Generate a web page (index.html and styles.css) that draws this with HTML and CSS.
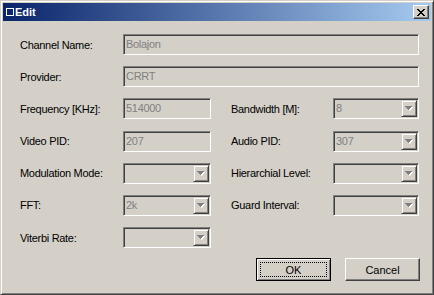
FILE: index.html
```html
<!DOCTYPE html>
<html>
<head>
<meta charset="utf-8">
<link rel="stylesheet" href="styles.css">
</head>
<body>
<div class="window">
  <div class="titlebar">
    <span class="ticon"></span>
    <span class="ttext">Edit</span>
    <div class="close">
      <svg width="8" height="7" viewBox="0 0 8 7" shape-rendering="crispEdges">
        <g fill="#000">
          <rect x="0" y="0" width="2" height="1"/><rect x="6" y="0" width="2" height="1"/>
          <rect x="1" y="1" width="2" height="1"/><rect x="5" y="1" width="2" height="1"/>
          <rect x="2" y="2" width="4" height="1"/>
          <rect x="3" y="3" width="2" height="1"/>
          <rect x="2" y="4" width="4" height="1"/>
          <rect x="1" y="5" width="2" height="1"/><rect x="5" y="5" width="2" height="1"/>
          <rect x="0" y="6" width="2" height="1"/><rect x="6" y="6" width="2" height="1"/>
        </g>
      </svg>
    </div>
  </div>
  <div class="content">
    <div class="form">
      <div class="lbl">Channel Name:</div>
      <div class="edit wide">Bolajon</div>

      <div class="lbl">Provider:</div>
      <div class="edit wide">CRRT</div>

      <div class="lbl">Frequency [KHz]:</div>
      <div class="edit">514000</div>
      <div class="lbl right">Bandwidth [M]:</div>
      <div class="edit combo"><span class="val">8</span><span class="drop"><svg width="8" height="5" viewBox="0 0 8 5" shape-rendering="crispEdges"><g fill="#fff"><rect x="1" y="1" width="7" height="1"/><rect x="2" y="2" width="5" height="1"/><rect x="3" y="3" width="3" height="1"/><rect x="4" y="4" width="1" height="1"/></g><g fill="#808080"><rect x="0" y="0" width="7" height="1"/><rect x="1" y="1" width="5" height="1"/><rect x="2" y="2" width="3" height="1"/><rect x="3" y="3" width="1" height="1"/></g></svg></span></div>

      <div class="lbl">Video PID:</div>
      <div class="edit">207</div>
      <div class="lbl right">Audio PID:</div>
      <div class="edit combo"><span class="val">307</span><span class="drop"><svg width="8" height="5" viewBox="0 0 8 5" shape-rendering="crispEdges"><g fill="#fff"><rect x="1" y="1" width="7" height="1"/><rect x="2" y="2" width="5" height="1"/><rect x="3" y="3" width="3" height="1"/><rect x="4" y="4" width="1" height="1"/></g><g fill="#808080"><rect x="0" y="0" width="7" height="1"/><rect x="1" y="1" width="5" height="1"/><rect x="2" y="2" width="3" height="1"/><rect x="3" y="3" width="1" height="1"/></g></svg></span></div>

      <div class="lbl">Modulation Mode:</div>
      <div class="edit combo"><span class="val"></span><span class="drop"><svg width="8" height="5" viewBox="0 0 8 5" shape-rendering="crispEdges"><g fill="#fff"><rect x="1" y="1" width="7" height="1"/><rect x="2" y="2" width="5" height="1"/><rect x="3" y="3" width="3" height="1"/><rect x="4" y="4" width="1" height="1"/></g><g fill="#808080"><rect x="0" y="0" width="7" height="1"/><rect x="1" y="1" width="5" height="1"/><rect x="2" y="2" width="3" height="1"/><rect x="3" y="3" width="1" height="1"/></g></svg></span></div>
      <div class="lbl right">Hierarchial Level:</div>
      <div class="edit combo"><span class="val"></span><span class="drop"><svg width="8" height="5" viewBox="0 0 8 5" shape-rendering="crispEdges"><g fill="#fff"><rect x="1" y="1" width="7" height="1"/><rect x="2" y="2" width="5" height="1"/><rect x="3" y="3" width="3" height="1"/><rect x="4" y="4" width="1" height="1"/></g><g fill="#808080"><rect x="0" y="0" width="7" height="1"/><rect x="1" y="1" width="5" height="1"/><rect x="2" y="2" width="3" height="1"/><rect x="3" y="3" width="1" height="1"/></g></svg></span></div>

      <div class="lbl">FFT:</div>
      <div class="edit combo"><span class="val">2k</span><span class="drop"><svg width="8" height="5" viewBox="0 0 8 5" shape-rendering="crispEdges"><g fill="#fff"><rect x="1" y="1" width="7" height="1"/><rect x="2" y="2" width="5" height="1"/><rect x="3" y="3" width="3" height="1"/><rect x="4" y="4" width="1" height="1"/></g><g fill="#808080"><rect x="0" y="0" width="7" height="1"/><rect x="1" y="1" width="5" height="1"/><rect x="2" y="2" width="3" height="1"/><rect x="3" y="3" width="1" height="1"/></g></svg></span></div>
      <div class="lbl right">Guard Interval:</div>
      <div class="edit combo"><span class="val"></span><span class="drop"><svg width="8" height="5" viewBox="0 0 8 5" shape-rendering="crispEdges"><g fill="#fff"><rect x="1" y="1" width="7" height="1"/><rect x="2" y="2" width="5" height="1"/><rect x="3" y="3" width="3" height="1"/><rect x="4" y="4" width="1" height="1"/></g><g fill="#808080"><rect x="0" y="0" width="7" height="1"/><rect x="1" y="1" width="5" height="1"/><rect x="2" y="2" width="3" height="1"/><rect x="3" y="3" width="1" height="1"/></g></svg></span></div>

      <div class="lbl">Viterbi Rate:</div>
      <div class="edit combo"><span class="val"></span><span class="drop"><svg width="8" height="5" viewBox="0 0 8 5" shape-rendering="crispEdges"><g fill="#fff"><rect x="1" y="1" width="7" height="1"/><rect x="2" y="2" width="5" height="1"/><rect x="3" y="3" width="3" height="1"/><rect x="4" y="4" width="1" height="1"/></g><g fill="#808080"><rect x="0" y="0" width="7" height="1"/><rect x="1" y="1" width="5" height="1"/><rect x="2" y="2" width="3" height="1"/><rect x="3" y="3" width="1" height="1"/></g></svg></span></div>
    </div>
    <div class="buttons">
      <div class="btn default"><span class="focus">OK</span></div>
      <div class="btn">Cancel</div>
    </div>
  </div>
</div>
</body>
</html>
```

FILE: styles.css
```css
html, body {
  margin: 0;
  padding: 0;
  background: #d4d0c8;
  overflow: hidden;
}

.window {
  box-sizing: border-box;
  width: 434px;
  height: 295px;
  background: #d4d0c8;
  border: 1px solid;
  border-color: #d4d0c8 #404040 #404040 #d4d0c8;
  box-shadow: inset 1px 1px #ffffff, inset -1px -1px #808080;
  padding: 2px;
  font-family: "Liberation Sans", Arial, sans-serif;
  font-size: 11px;
  letter-spacing: -0.3px;
  color: #000;
}

.titlebar {
  display: flex;
  align-items: center;
  height: 18px;
  padding: 0 2px 0 3px;
  background: linear-gradient(to right, #0a246a, #a6caf0);
}

.ticon {
  box-sizing: border-box;
  width: 8px;
  height: 8px;
  border: 1px solid #ffffff;
}

.ttext {
  margin-left: 1px;
  color: #fff;
  font-weight: bold;
  letter-spacing: 0;
  flex: 1;
}

.close {
  box-sizing: border-box;
  width: 16px;
  height: 14px;
  display: flex;
  align-items: center;
  justify-content: center;
  background: #d4d0c8;
  border: 1px solid;
  border-color: #ffffff #404040 #404040 #ffffff;
  box-shadow: inset -1px -1px #808080;
}

.content {
  padding: 13px 11px 0 17px;
}

.form {
  display: grid;
  grid-template-columns: 103px 88px 20px 102px 86px;
  grid-auto-rows: 21px;
  row-gap: 11.2px;
  align-items: center;
}

.lbl {
  grid-column: 1;
  white-space: nowrap;
}

.lbl.right {
  grid-column: 4;
}

.edit {
  box-sizing: border-box;
  height: 21px;
  border: 1px solid;
  border-color: #808080 #ffffff #ffffff #808080;
  box-shadow: inset 1px 1px #404040, inset -1px -1px #d4d0c8;
  padding: 0 2px;
  color: #808080;
  line-height: 19px;
  background: #d4d0c8;
  white-space: nowrap;
}

.edit.wide {
  grid-column: 2 / 6;
}

.combo {
  display: flex;
  padding: 1px 1px 1px 2px;
  line-height: 17px;
}

.combo .val {
  flex: 1;
}

.drop {
  box-sizing: border-box;
  width: 16px;
  height: 17px;
  display: flex;
  align-items: center;
  justify-content: center;
  background: #d4d0c8;
  border: 1px solid;
  border-color: #d4d0c8 #404040 #404040 #d4d0c8;
  box-shadow: inset 1px 1px #ffffff, inset -1px -1px #808080;
}

.buttons {
  display: flex;
  justify-content: flex-end;
  gap: 14px;
  margin-top: 10px;
}

.btn {
  box-sizing: border-box;
  width: 75px;
  height: 23px;
  display: flex;
  align-items: center;
  justify-content: center;
  border: 1px solid;
  border-color: #ffffff #404040 #404040 #ffffff;
  box-shadow: inset -1px -1px #808080;
  background: #d4d0c8;
  letter-spacing: 0;
}

.btn.default {
  border-color: #000;
  box-shadow: inset 1px 1px #ffffff, inset -1px -1px #808080;
  padding: 3px;
}

.focus {
  box-sizing: border-box;
  flex: 1;
  align-self: stretch;
  display: flex;
  align-items: center;
  justify-content: center;
  border: 1px dotted #000;
}
```
